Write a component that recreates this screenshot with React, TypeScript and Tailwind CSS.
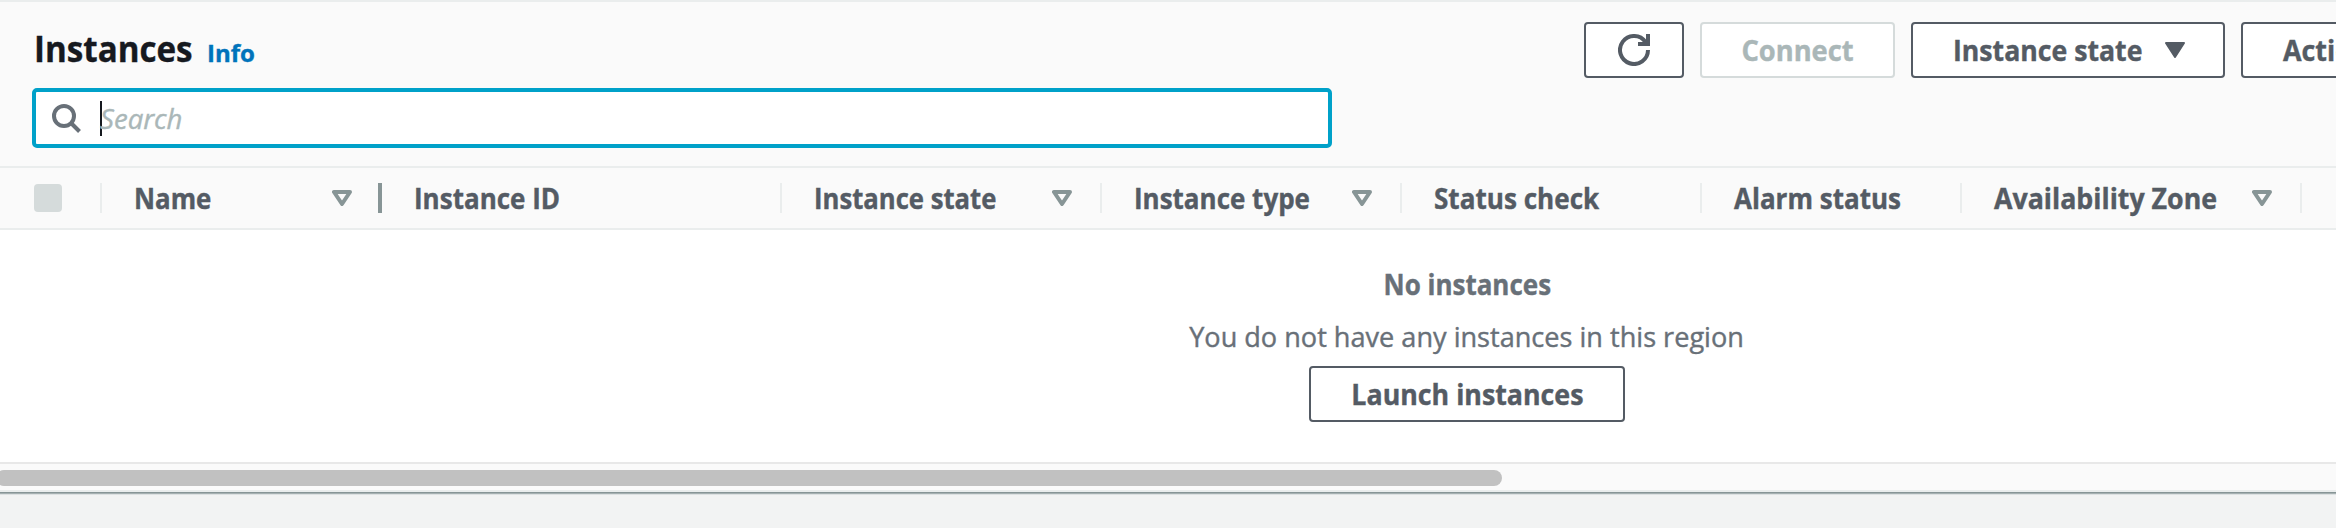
import type { ReactNode } from "react";

type Column = {
  label: string;
  width: string;
  fit: string;
  sortable?: boolean;
  sortOffset?: string;
  active?: boolean;
};

const columns: Column[] = [
  { label: "Name", width: "w-[280px]", fit: "scale-x-[0.924]", sortable: true, sortOffset: "mr-[26px]", active: true },
  { label: "Instance ID", width: "w-[400px]", fit: "scale-x-[0.929]" },
  { label: "Instance state", width: "w-[320px]", fit: "scale-x-[0.917]", sortable: true, sortOffset: "mr-7" },
  { label: "Instance type", width: "w-[300px]", fit: "scale-x-[0.928]", sortable: true, sortOffset: "mr-7" },
  { label: "Status check", width: "w-[300px]", fit: "scale-x-[0.932]" },
  { label: "Alarm status", width: "w-[260px]", fit: "scale-x-[0.929]" },
  { label: "Availability Zone", width: "w-[340px]", fit: "scale-x-[0.956]", sortable: true, sortOffset: "mr-7" },
];

function SortIcon({ className }: { className?: string }) {
  return (
    <svg viewBox="0 0 20 16" className={`h-4 w-5 shrink-0 ${className ?? ""}`} fill="none" stroke="#879596" strokeWidth="4" strokeLinejoin="round">
      <path d="M2 2h16l-8 12z" />
    </svg>
  );
}

function CaretDown() {
  return (
    <svg viewBox="0 0 20 16" className="h-4 w-5 shrink-0" fill="#545b64" stroke="#545b64" strokeWidth="2" strokeLinejoin="round">
      <path d="M1 1h18l-9 14z" />
    </svg>
  );
}

function RefreshIcon() {
  return (
    <svg viewBox="0 0 32 32" className="size-8" fill="none" stroke="#545b64" strokeWidth="4">
      <path d="M30 16A14 14 0 1 1 27.5 8" />
      <path d="M30 0v10H20" />
      <path d="M28 6v4" />
    </svg>
  );
}

function SearchIcon() {
  return (
    <svg viewBox="0 0 32 32" className="size-8 shrink-0" fill="none" stroke="#687078" strokeWidth="4">
      <circle cx="14" cy="14" r="10" />
      <path d="M21 21l8.5 8.5" />
    </svg>
  );
}

function Button({ className, disabled, children }: { className: string; disabled?: boolean; children: ReactNode }) {
  return (
    <button
      disabled={disabled}
      className={`flex h-14 shrink-0 items-center rounded-[4px] border-2 bg-white font-bold ${
        disabled ? "border-[#d5dbdb] text-[#aab7b8]" : "border-[#545b64] text-[#545b64]"
      } ${className}`}
    >
      {children}
    </button>
  );
}

export default function App() {
  return (
    <div className="h-[528px] w-full overflow-hidden bg-[#f2f3f3] font-['Open_Sans',sans-serif] text-[28px] leading-10 whitespace-nowrap [-webkit-text-stroke:0.4px]">
      <header className="border-y-2 border-[#eaeded] bg-[#fafafa] pt-5 pb-[18px]">
        <div className="flex h-14 justify-between">
          <div className="flex h-[54px] items-baseline pl-[34px] leading-[54px] font-bold">
            <h1 className="w-[173px] origin-left scale-x-[0.921] text-[36px] text-[#16191f]">Instances</h1>
            <a className="text-[24px] text-[#0073bb]">Info</a>
          </div>
          <div className="flex w-[752px] gap-4 overflow-hidden">
            <Button className="w-[100px] justify-center">
              <RefreshIcon />
            </Button>
            <Button disabled className="w-[195px] justify-center">
              <span className="scale-x-[0.975]">Connect</span>
            </Button>
            <Button className="w-[314px] justify-between pr-[38px] pl-10">
              <span className="origin-left scale-x-[0.952]">Instance state</span>
              <CaretDown />
            </Button>
            <Button className="w-[200px] pl-10">
              <span className="origin-left scale-x-[0.96]">Actions</span>
            </Button>
          </div>
        </div>
        <div className="mt-2.5 ml-8 flex h-15 w-[1300px] items-center rounded-[5px] border-4 border-[#00a1c9] bg-white pl-3.5">
          <SearchIcon />
          <span className="mt-px ml-[18px] h-[35px] w-0.5 bg-[#16191f]" />
          <span className="-ml-0.5 origin-left scale-x-[0.985] text-[#aab7b8] italic">Search</span>
        </div>
      </header>

      <div className="flex h-[62px] items-center border-b-2 border-[#eaeded] bg-[#fafafa] font-bold text-[#545b64]">
        <div className="flex h-[30px] w-[102px] shrink-0 items-center border-r-2 border-[#eaeded] pl-[34px]">
          <span className="size-7 rounded-[4px] bg-[#d5dbdb]" />
        </div>
        {columns.map((c) => (
          <div
            key={c.label}
            className={`flex h-[30px] shrink-0 items-center justify-between pl-8 ${c.width} ${
              c.active ? "border-r-4 border-[#879596]" : "border-r-2 border-[#eaeded]"
            }`}
          >
            <span className={`origin-left ${c.fit}`}>{c.label}</span>
            {c.sortable && <SortIcon className={c.sortOffset} />}
          </div>
        ))}
      </div>

      <main className="h-[232px] bg-white">
        <div className="flex w-[2934px] flex-col items-center pt-[34px] text-[#687078]">
          <p className="scale-x-[0.928] font-bold">No instances</p>
          <p className="mt-3 scale-x-[0.968]">You do not have any instances in this region</p>
          <Button className="mt-2.5 w-[316px] justify-center">
            <span className="scale-x-[0.956]">Launch instances</span>
          </Button>
        </div>
      </main>

      <div className="h-[30px] border-t-2 border-b-2 border-t-[#e8e8e8] border-b-[#eaeded] bg-[#fafafa] pt-1.5">
        <div className="-ml-1 h-4 w-[1506px] rounded-full bg-[#c1c1c1]" />
      </div>
      <div className="h-px bg-[#879596]" />
      <div className="h-px bg-[#a5b0b1]" />
      <div className="h-px bg-[#dde1e2]" />
    </div>
  );
}
